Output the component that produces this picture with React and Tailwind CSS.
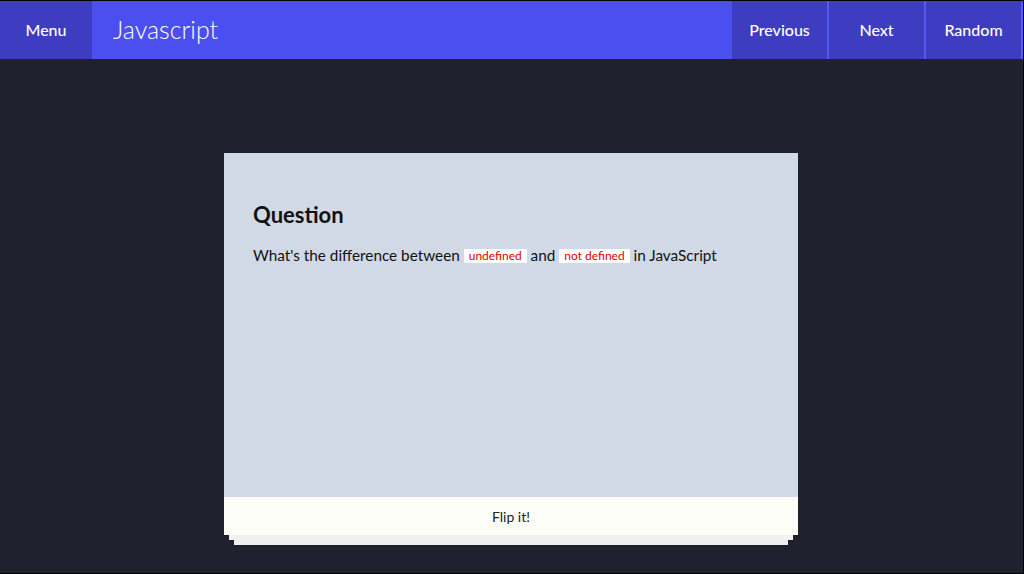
import React from 'react';

function NavButton({ label }) {
  return (
    <button className="h-full w-[97px] border-r-2 border-[#5558f2] bg-[#3e3cc1] text-[16px] font-medium text-white">
      {label}
    </button>
  );
}

function Code({ children }) {
  return (
    <code className="inline-block bg-white px-[5px] py-0 text-[12px] leading-[14px] text-[#e00000] align-[1px] font-['Lato',sans-serif]">
      {children}
    </code>
  );
}

export default function App() {
  return (
    <div className="flex h-[574px] w-[1024px] flex-col overflow-hidden border-y border-r border-black bg-[#1f222e] font-['Lato','Liberation_Sans',sans-serif]">
      <header className="flex h-[58px] shrink-0 items-stretch bg-[#4c4ff0]">
        <button className="w-[92px] bg-[#3e3cc1] text-[16px] font-medium text-white">Menu</button>
        <h1 className="flex items-center pl-[21px] text-[25px] font-light text-white">Javascript</h1>
        <nav className="ml-auto flex">
          <NavButton label="Previous" />
          <NavButton label="Next" />
          <NavButton label="Random" />
        </nav>
      </header>

      <main className="flex flex-1 pl-[224px] pt-[94px]">
        <div className="flex w-[574px] flex-col">
          <section className="flex h-[344px] flex-col bg-[#d2d9e6] px-[29px] pt-[48px]">
            <h2 className="text-[22px] font-bold leading-[28px] text-[#111]">Question</h2>
            <p className="mt-[15px] text-[15.3px] leading-[22px] text-[#111]">
              What's the difference between <Code>undefined</Code> and <Code>not defined</Code> in JavaScript
            </p>
          </section>
          <button className="h-[38px] bg-[#fdfdf8] text-[14px] text-[#222] shadow-[0_1px_1px_rgba(0,0,0,0.15)]">Flip it!</button>
          <div className="mx-[5px] h-[5px] bg-[#f1f1ef] shadow-[0_1px_1px_rgba(0,0,0,0.2)]" />
          <div className="mx-[10px] h-[5px] bg-[#eeeeec] shadow-[0_1px_1px_rgba(0,0,0,0.2)]" />
        </div>
      </main>
    </div>
  );
}
